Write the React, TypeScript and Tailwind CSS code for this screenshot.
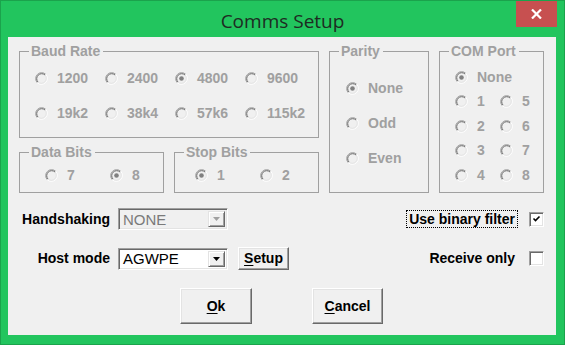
import React from 'react';

const font = { fontFamily: '"Liberation Sans", Arial, sans-serif' };

const RadioDot = ({ checked }: { checked?: boolean }) => (
  <svg width="13" height="13" viewBox="0 0 13 13" className="shrink-0">
    <circle cx="6.5" cy="6.5" r="5.5" fill="#f0f0f0" />
    <path d="M2.26 10.74 A6 6 0 0 1 10.74 2.26" fill="none" stroke="#a0a0a0" />
    <path d="M10.74 2.26 A6 6 0 0 1 2.26 10.74" fill="none" stroke="#ffffff" />
    <path d="M2.97 10.03 A5 5 0 0 1 10.03 2.97" fill="none" stroke="#696969" />
    <path d="M10.03 2.97 A5 5 0 0 1 2.97 10.03" fill="none" stroke="#e3e3e3" />
    {checked && <circle cx="6.5" cy="6.5" r="2.3" fill="#808080" />}
  </svg>
);

const Radio = ({ label, checked }: { label: string; checked?: boolean }) => (
  <div className="flex items-center h-[20px] gap-[9px] text-[#a0a0a0]">
    <RadioDot checked={checked} />
    <span>{label}</span>
  </div>
);

const Group = ({ title, className, children }: { title: string; className: string; children: React.ReactNode }) => (
  <fieldset className={`min-w-0 border border-[#a0a0a0] ${className}`}>
    <legend className="ml-[9px] pl-[2px] pr-[3px] text-[#a0a0a0] leading-[16px]">{title}</legend>
    {children}
  </fieldset>
);

const Combo = ({ value, disabled }: { value: string; disabled?: boolean }) => (
  <div
    className={`w-[110px] h-[22px] flex items-center border border-t-[#a0a0a0] border-l-[#a0a0a0] border-r-white border-b-white shadow-[inset_1px_1px_0_#696969,inset_-1px_-1px_0_#e3e3e3] p-[2px] ${disabled ? 'bg-[#f0f0f0]' : 'bg-white'}`}
  >
    <span
      className={`flex-1 pl-[2px] text-[15px] font-normal leading-none ${disabled ? 'text-[#7a7a7a]' : 'text-black'}`}
    >
      {value}
    </span>
    <div className="w-[17px] h-full flex items-center justify-center bg-[#f0f0f0] border border-t-[#e3e3e3] border-l-[#e3e3e3] border-r-[#696969] border-b-[#696969] shadow-[inset_1px_1px_0_#fff,inset_-1px_-1px_0_#a0a0a0]">
      <svg width="7" height="4" viewBox="0 0 7 4">
        <path d="M0 0 H7 L3.5 4 Z" fill={disabled ? '#a0a0a0' : '#000'} />
      </svg>
    </div>
  </div>
);

const Button = ({ children, className }: { children: React.ReactNode; className: string }) => (
  <button
    className={`flex items-center justify-center bg-[#f0f0f0] border border-t-white border-l-white border-r-[#696969] border-b-[#696969] shadow-[inset_-1px_-1px_0_#a0a0a0,inset_1px_1px_0_#e3e3e3] text-black font-bold ${className}`}
  >
    {children}
  </button>
);

const CheckBox = ({ checked }: { checked?: boolean }) => (
  <div className="w-[15px] h-[15px] flex items-center justify-center bg-white border border-t-[#a0a0a0] border-l-[#a0a0a0] border-r-white border-b-white shadow-[inset_1px_1px_0_#696969,inset_-1px_-1px_0_#e3e3e3]">
    {checked && (
      <svg width="9" height="8" viewBox="0 0 9 8">
        <path d="M1.5 3.5 L3.5 5.5 L7.5 1.5" fill="none" stroke="#000" strokeWidth="1.6" />
      </svg>
    )}
  </div>
);

export default function App() {
  return (
    <div className="w-[565px] h-[345px] bg-[#22c55e] border border-[#1ba34c] flex flex-col" style={font}>
      <div className="h-[36px] relative flex items-center justify-center">
        <span
          className="text-[19px] text-[#1e2b22] mt-[4px]"
          style={{ fontFamily: '"Open Sans", "Noto Sans", sans-serif' }}
        >
          Comms Setup
        </span>
        <div className="absolute top-0 right-[7px] w-[41px] h-[26px] bg-[#c75050] flex items-center justify-center">
          <svg width="11" height="10" viewBox="0 0 11 10">
            <path d="M1 0.5 L10 9.5 M10 0.5 L1 9.5" stroke="#fff" strokeWidth="2.2" />
          </svg>
        </div>
      </div>

      <div className="ml-[7px] w-[548px] h-[298px] bg-[#f0f0f0] flex flex-col pt-[6px] pl-[11px] pr-[12px] text-[14px] font-bold">
        <div className="flex gap-[10px] items-start">
          <div className="w-[300px] flex flex-col gap-[6px]">
            <Group title="Baud Rate" className="h-[95px]">
              <div className="grid grid-cols-[70px_70px_70px_70px] gap-y-[15px] pl-[15px] pt-[9px]">
                <Radio label="1200" />
                <Radio label="2400" />
                <Radio label="4800" checked />
                <Radio label="9600" />
                <Radio label="19k2" />
                <Radio label="38k4" />
                <Radio label="57k6" />
                <Radio label="115k2" />
              </div>
            </Group>
            <div className="flex gap-[10px]">
              <Group title="Data Bits" className="w-[145px] h-[49px]">
                <div className="grid grid-cols-[65px_45px] pl-[25px] pt-[5px]">
                  <Radio label="7" />
                  <Radio label="8" checked />
                </div>
              </Group>
              <Group title="Stop Bits" className="w-[145px] h-[49px]">
                <div className="grid grid-cols-[65px_45px] pl-[20px] pt-[5px]">
                  <Radio label="1" checked />
                  <Radio label="2" />
                </div>
              </Group>
            </div>
          </div>

          <Group title="Parity" className="w-[100px] h-[150px]">
            <div className="flex flex-col gap-[15px] pl-[16px] pt-[19px]">
              <Radio label="None" checked />
              <Radio label="Odd" />
              <Radio label="Even" />
            </div>
          </Group>

          <Group title="COM Port" className="w-[105px] h-[150px]">
            <div className="grid grid-cols-[45px_45px] gap-y-[4.5px] pl-[15px] pt-[8px]">
              <div className="col-span-2">
                <Radio label="None" checked />
              </div>
              <Radio label="1" />
              <Radio label="5" />
              <Radio label="2" />
              <Radio label="6" />
              <Radio label="3" />
              <Radio label="7" />
              <Radio label="4" />
              <Radio label="8" />
            </div>
          </Group>
        </div>

        <div className="mt-[15px] flex items-center justify-between">
          <div className="flex items-center gap-[8px]">
            <span className="w-[91px] text-right text-black">Handshaking</span>
            <Combo value="NONE" disabled />
          </div>
          <div className="flex items-center gap-[11px]">
            <span className="border border-dotted border-black px-[2px] h-[18px] leading-[16px] text-black">
              Use binary filter
            </span>
            <CheckBox checked />
          </div>
        </div>

        <div className="mt-[17px] flex items-center justify-between">
          <div className="flex items-center gap-[8px]">
            <span className="w-[91px] text-right text-black">Host mode</span>
            <Combo value="AGWPE" />
            <Button className="ml-[2px] w-[51px] h-[23px]">
              <span>
                <u className="underline-offset-2">S</u>etup
              </span>
            </Button>
          </div>
          <div className="flex items-center gap-[11px]">
            <span className="px-[3px] text-black">Receive only</span>
            <CheckBox />
          </div>
        </div>

        <div className="mt-[18px] flex justify-center gap-[60px]">
          <Button className="w-[72px] h-[36px]">
            <span>
              <u className="underline-offset-2">O</u>k
            </span>
          </Button>
          <Button className="w-[71px] h-[36px]">
            <span>
              <u className="underline-offset-2">C</u>ancel
            </span>
          </Button>
        </div>
      </div>
    </div>
  );
}
